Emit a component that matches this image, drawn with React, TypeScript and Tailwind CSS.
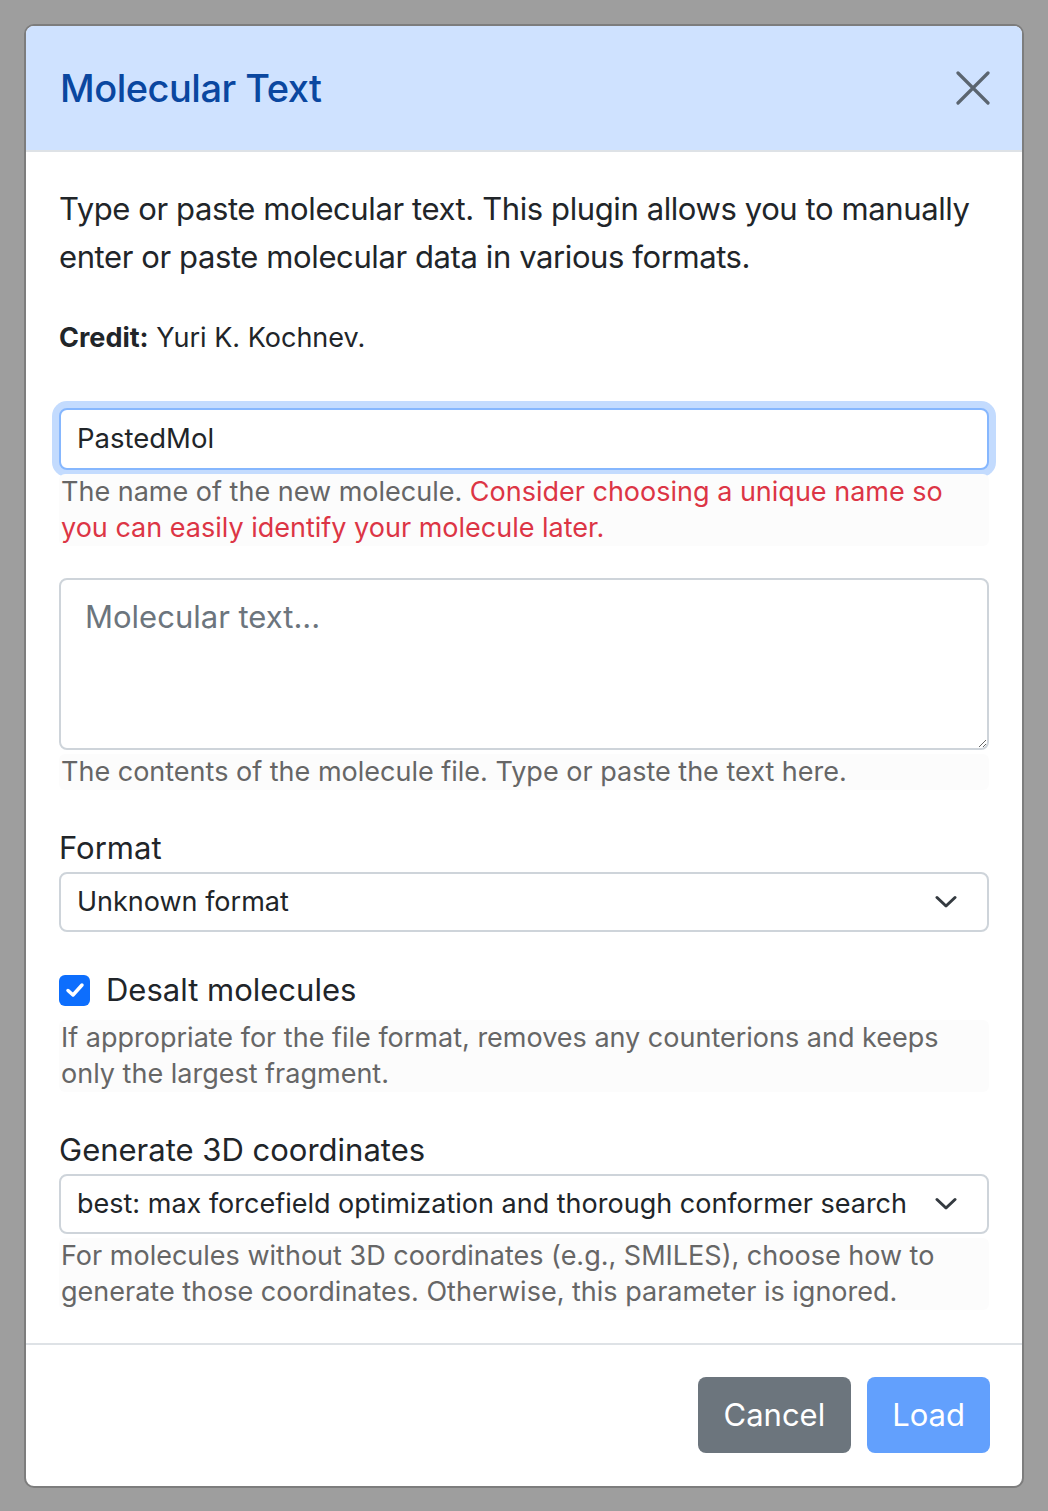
import React from "react";

const font = { fontFamily: "Inter, 'Noto Sans', sans-serif" };

function Help({ children }: { children: React.ReactNode }) {
  return (
    <div className="mt-[4px] rounded-[6px] bg-[#fcfcfc] px-[2px] text-[27px] leading-[36px] text-[#666666]">
      {children}
    </div>
  );
}

function Chevron() {
  return (
    <svg width="22" height="14" viewBox="0 0 22 14" fill="none">
      <path d="M2 2.5 L11 11 L20 2.5" stroke="#343a40" strokeWidth="3" strokeLinecap="round" strokeLinejoin="round" />
    </svg>
  );
}

function Select({ value }: { value: string }) {
  return (
    <div className="mt-[3px] flex h-[60px] items-center justify-between rounded-[8px] border-2 border-[#ced4da] bg-white pl-[16px] pr-[30px] text-[27px] text-[#212529]">
      <span className="whitespace-nowrap">{value}</span>
      <Chevron />
    </div>
  );
}

export default function App() {
  return (
    <div className="min-h-screen bg-[#9e9e9e] px-[24px] pt-[24px]" style={font}>
      <div className="w-[1000px] overflow-hidden rounded-[10px] border-2 border-[#7d7d7d] bg-white">
        <div className="flex h-[126px] items-center justify-between border-b-2 border-[#dee2e6] bg-[#cfe2ff] pl-[34px] pr-[32px]">
          <h5 className="text-[38px] font-medium tracking-[-0.5px] text-[#0a47a0]">Molecular Text</h5>
          <svg width="34" height="34" viewBox="0 0 34 34">
            <path d="M2 2 L32 32 M32 2 L2 32" stroke="#5b6570" strokeWidth="3.2" strokeLinecap="round" />
          </svg>
        </div>
        <div className="px-[33px] pb-[33px] pt-[33px] text-[#212529]">
          <p className="text-[31px] leading-[48px] tracking-[-0.4px]">
            Type or paste molecular text. This plugin allows you to manually enter or paste molecular data in various formats.
          </p>
          <p className="mt-[36px] text-[27px] leading-[42px]">
            <strong className="font-bold">Credit:</strong> Yuri K. Kochnev.
          </p>

          <div className="mt-[49px] flex h-[62px] items-center rounded-[8px] border-2 border-[#86b7fe] bg-white px-[16px] text-[27.5px] shadow-[0_0_0_7px_#c3dbfe]">
            PastedMol
          </div>
          <Help>
            The name of the new molecule.{" "}
            <span className="text-[#dc3545]">Consider choosing a unique name so you can easily identify your molecule later.</span>
          </Help>

          <textarea
            className="mt-[32px] block h-[172px] w-full resize-y rounded-[8px] border-2 border-[#ced4da] bg-white px-[24px] py-[14px] text-[31px] text-[#212529] placeholder:text-[#6c757d] outline-none"
            placeholder="Molecular text..."
          />
          <Help>The contents of the molecule file. Type or paste the text here.</Help>

          <div className="mt-[37px] text-[31px] leading-[42px]">Format</div>
          <Select value="Unknown format" />

          <div className="mt-[37px] flex items-center gap-[16px] text-[31px] leading-[42px]">
            <div className="flex h-[31px] w-[31px] items-center justify-center rounded-[6px] bg-[#0d6efd]">
              <svg width="20" height="16" viewBox="0 0 20 16" fill="none">
                <path d="M3 8.5 L8 13 L17 3" stroke="white" strokeWidth="3.5" strokeLinecap="round" strokeLinejoin="round" />
              </svg>
            </div>
            <span>Desalt molecules</span>
          </div>
          <div className="mt-[9px]">
            <Help>If appropriate for the file format, removes any counterions and keeps only the largest fragment.</Help>
          </div>

          <div className="mt-[37px] text-[31px] leading-[42px]">Generate 3D coordinates</div>
          <Select value="best: max forcefield optimization and thorough conformer search" />
          <Help>
            For molecules without 3D coordinates (e.g., SMILES), choose how to generate those coordinates. Otherwise, this parameter is ignored.
          </Help>
        </div>
        <div className="flex justify-end gap-[16px] border-t-2 border-[#dee2e6] px-[32px] pb-[33px] pt-[32px]">
          <button className="h-[76px] rounded-[8px] bg-[#6c757d] px-[26px] text-[31px] text-white">Cancel</button>
          <button className="h-[76px] rounded-[8px] bg-[#62a0fd] px-[25px] text-[31px] text-white">Load</button>
        </div>
      </div>
    </div>
  );
}
